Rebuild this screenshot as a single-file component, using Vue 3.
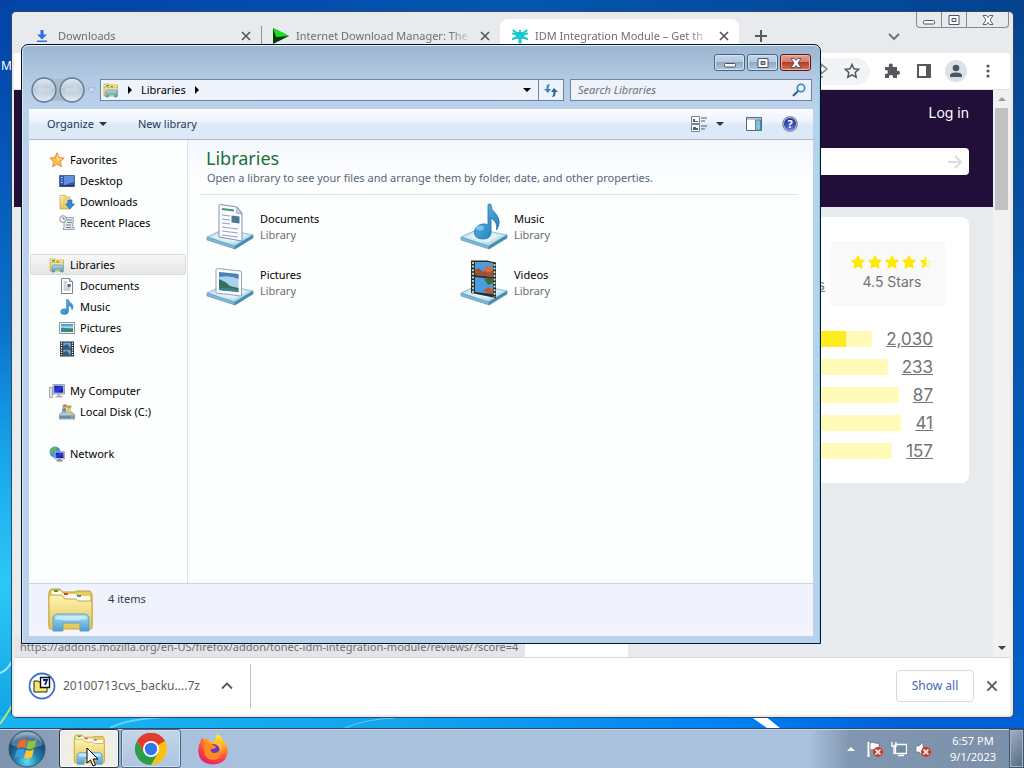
<template>
  <svg class="sprite" aria-hidden="true">
    <defs>
      <linearGradient id="gFolder" x1="0" y1="0" x2="0" y2="1">
        <stop offset="0" stop-color="#fdf3b0" />
        <stop offset="1" stop-color="#e5c556" />
      </linearGradient>
      <linearGradient id="gBlue" x1="0" y1="0" x2="0" y2="1">
        <stop offset="0" stop-color="#a9dcf5" />
        <stop offset="1" stop-color="#4d9fce" />
      </linearGradient>
      <linearGradient id="gNote" x1="0" y1="0" x2="1" y2="1">
        <stop offset="0" stop-color="#6fc3ee" />
        <stop offset="1" stop-color="#1577ba" />
      </linearGradient>
      <linearGradient id="gTray" x1="0" y1="0" x2="1" y2="1">
        <stop offset="0" stop-color="#b4d9ea" />
        <stop offset="0.5" stop-color="#dceff7" />
        <stop offset="1" stop-color="#8bc0dc" />
      </linearGradient>
      <linearGradient id="gScreen" x1="0" y1="0" x2="1" y2="1">
        <stop offset="0" stop-color="#1212a8" />
        <stop offset="0.5" stop-color="#2a3fe0" />
        <stop offset="1" stop-color="#0a0a80" />
      </linearGradient>
      <linearGradient id="gSky" x1="0" y1="0" x2="0" y2="1">
        <stop offset="0" stop-color="#3c86c8" />
        <stop offset="0.5" stop-color="#c3e2ee" />
        <stop offset="0.6" stop-color="#3c7a5c" />
        <stop offset="1" stop-color="#2a5e86" />
      </linearGradient>
      <radialGradient id="gOrb" cx="0.5" cy="0.85" r="0.8">
        <stop offset="0" stop-color="#5fe0f5" />
        <stop offset="0.4" stop-color="#1f7fae" />
        <stop offset="0.8" stop-color="#1a4470" />
        <stop offset="1" stop-color="#7ea2c0" />
      </radialGradient>
      <radialGradient id="gFox" cx="0.7" cy="0.1" r="1">
        <stop offset="0" stop-color="#ffe83a" />
        <stop offset="0.45" stop-color="#ff9a1f" />
        <stop offset="0.75" stop-color="#ff3a4a" />
        <stop offset="1" stop-color="#d81b7a" />
      </radialGradient>
      <linearGradient id="gCircle" x1="0" y1="0" x2="0" y2="1">
        <stop offset="0" stop-color="#dfe8f1" />
        <stop offset="0.5" stop-color="#b9c8d6" />
        <stop offset="1" stop-color="#e2edf7" />
      </linearGradient>
    </defs>

    <symbol id="libraries" viewBox="0 0 16 16">
      <path d="M1 3.500V2h5l1 1h7.500v11H1z" fill="url(#gFolder)" stroke="#c3a148" stroke-width=".7" />
      <path d="M3 3h3v1.500H3z" fill="#4aa34a" />
      <path d="M7.500 4H10v1.200H7.500z" fill="#d9663a" />
      <path d="M1 5.500h13.500" stroke="#c9a84c" stroke-width=".6" />
      <path d="M3 15V9.500q0-1.500 1.500-1.500h8q1.500 0 1.500 1.500V15h-2.500v-3h-6v3z" fill="url(#gBlue)" stroke="#4089b5" stroke-width=".6" />
    </symbol>

    <symbol id="bigfolder" viewBox="0 0 46 46">
      <path d="M2 40V6l2-3h9l2 3h13l2-1h13l2 3v32z" fill="#eacb62" stroke="#bd9a3b" />
      <path d="M5 5h9l2 3h12l2 2h13v5H4z" fill="#fffdf0" />
      <path d="M7 4h4v2H7z" fill="#3ba04a" />
      <path d="M17 7h4v2h-4z" fill="#d5482c" />
      <path d="M30 9h4v2h-4z" fill="#4385d4" />
      <path d="M2 9h13l3 4h11l2 2h14v27q0 1-1 1H3q-1 0-1-1z" fill="url(#gFolder)" stroke="#c6a547" />
      <path d="M6 45V33q0-5 5-5h26q5 0 5 5v12h-9v-7q0-1-1-1H17q-1 0-1 1v7z" fill="url(#gBlue)" stroke="#5aa3cc" />
      <path d="M8 33q0-3 4-3h24q4 0 4 3-16 3-32 0z" fill="#d3effb" opacity=".8" />
    </symbol>

    <symbol id="star" viewBox="0 0 16 16">
      <path d="M8 .8l2.200 4.700 5 .6-3.700 3.500 1 5.200L8 12.200l-4.500 2.600 1-5.200L.8 6.100l5-.6z" fill="#fdb94a" stroke="#d9822b" stroke-width=".8" />
      <path d="M8 2.500l1.500 3.700 3.500.5L8 9z" fill="#ffe59a" />
    </symbol>

    <symbol id="desktop" viewBox="0 0 16 16">
      <path d="M.5 2.500h15v11H.5z" fill="#2a56b8" stroke="#56688a" />
      <path d="M5 3h10v6q-6 1-10 4z" fill="#5f8ee2" />
      <path d="M2 4h1.500v1H2zM2 6.500h1.500v1H2zM2 9h1.500v1H2z" fill="#d7e6ff" />
      <path d="M1 12h14v1.500H1z" fill="#283a5c" />
    </symbol>

    <symbol id="downloads" viewBox="0 0 16 16">
      <path d="M1 1.500h5l1 1.500h4v12H1z" fill="url(#gFolder)" stroke="#c3a148" stroke-width=".7" />
      <path d="M5 1l3 1.500V15L5 13z" fill="#f2dd84" stroke="#c3a148" stroke-width=".5" />
      <path d="M9 6h4v4h2.500L11 15 6.500 10H9z" fill="#2f8be0" stroke="#195a9f" stroke-width=".6" />
    </symbol>

    <symbol id="recent" viewBox="0 0 16 16">
      <path d="M5 2.500h9.500l-1 10h1.500v2H4l1-2z" fill="#e5e9ed" stroke="#858e98" stroke-width=".8" />
      <path d="M8 5h5M8 7.500h5M7 10h5M7 12.500h5" stroke="#768290" />
      <circle cx="4" cy="4" r="3.300" fill="#f5f7f9" stroke="#8b939c" />
      <path d="M4 2v2h2" stroke="#555" fill="none" stroke-width=".8" />
    </symbol>

    <symbol id="document" viewBox="0 0 16 16">
      <path d="M2.500.5h8l3 3v12h-11z" fill="#fff" stroke="#7b8288" />
      <path d="M10.500.5v3h3" fill="#dfe4e8" stroke="#7b8288" />
      <path d="M4.500 4h4M4.500 6h3M4.500 8h3M4.500 10h7M4.500 12h7" stroke="#8a9299" stroke-width=".8" />
      <path d="M8.500 6h3v3h-3z" fill="#45607c" />
    </symbol>

    <symbol id="music" viewBox="0 0 16 16">
      <path d="M7.500.5h2q.5 3 3.500 4.500 2 2 0 6 0-3.500-3.500-4.500v5.500q0 3.500-4 3.500-4 0-4-2.700 0-3 4-3 1 0 2 .3z" fill="url(#gNote)" stroke="#2a82bb" stroke-width=".5" />
    </symbol>

    <symbol id="picture" viewBox="0 0 16 16">
      <path d="M.5 2.500h15v11H.5z" fill="#f5f8fa" stroke="#8695a2" />
      <path d="M2 4h12v8H2z" fill="url(#gSky)" />
      <path d="M2 8q5-1 12 2v2H2z" fill="#2f8d83" />
    </symbol>

    <symbol id="video" viewBox="0 0 16 16">
      <path d="M1 .5h14v15H1z" fill="#202830" />
      <path d="M4.200 1.500h7.600v6H4.200zM4.200 8.500h7.600v6H4.200z" fill="#6fa6cf" />
      <path d="M4.200 5l4-2 3.600 4.500H4.200zM4.200 12l3-2.500 4.600 5H4.200z" fill="#33597e" />
      <path d="M2.500 1.500v13M13.500 1.500v13" stroke="#fff" stroke-width="1.400" stroke-dasharray="1.300 1" />
    </symbol>

    <symbol id="computer" viewBox="0 0 16 16">
      <path d="M.5 4.500h3v10h-3z" fill="#dfe2e6" stroke="#8d949c" stroke-width=".8" />
      <path d="M4 1.500h11.500v9.500H4z" fill="#cfd6dd" stroke="#8b949e" stroke-width=".8" />
      <path d="M5.200 2.700h9v7h-9z" fill="url(#gScreen)" />
      <path d="M8.500 11h3v2h2v1.500h-7V13h2z" fill="#a8b1ba" />
    </symbol>

    <symbol id="disk" viewBox="0 0 16 16">
      <path d="M3 8h10l3 3v4H0v-4z" fill="#bcc6cf" stroke="#6d7984" stroke-width=".6" />
      <path d="M.5 11.500h15v3H.5z" fill="#6c8aa6" />
      <path d="M12 13h2" stroke="#6dfc68" />
      <path d="M4 .8q2-1 4 0L7.500 4q-2-1-4 0z" fill="#e8733a" />
      <path d="M8.500 1q2 1 4 0L12 4.200q-2 1-4 0z" fill="#8cbc3a" />
      <path d="M3.400 4.600q2-1 4 0L7 8q-2-1-4 0z" fill="#4b92d8" />
      <path d="M8 4.800q2 1 4 0L11.500 8.200q-2 1-4 0z" fill="#f3c53c" />
    </symbol>

    <symbol id="network" viewBox="0 0 16 16">
      <circle cx="6" cy="6" r="5.500" fill="#3d9bcb" />
      <path d="M2 3q3-3 6-2L7 4 4 5 3 8 1 6zM6 7l4-2v5l-3 1z" fill="#63b957" />
      <path d="M5.500 5.500h10v7.500h-10z" fill="#d3dbe3" stroke="#8590a0" stroke-width=".6" />
      <path d="M6.500 6.500h8v5.500h-8z" fill="url(#gScreen)" />
      <path d="M9 13h3v1h1.500v1.500h-6V14H9z" fill="#7f8fa0" />
    </symbol>

    <symbol id="tray" viewBox="0 0 48 48">
      <path d="M1 34l17-8 29 6-18 12z" fill="url(#gTray)" stroke="#6fa9c8" stroke-width=".7" />
      <path d="M1 34l28 9v3L1 37z" fill="#7db7d4" stroke="#5795b5" stroke-width=".6" />
      <path d="M29 43l18-11v3L29 46z" fill="#458fb2" stroke="#4685a5" stroke-width=".6" />
      <path d="M7 34l12-5.500 21 4-12 7z" fill="#eaf6fa" opacity=".75" />
    </symbol>

    <symbol id="bigdocument" viewBox="0 0 48 48">
      <use href="#tray" />
      <path d="M13 34V3q0-1.500 1.500-1.500L31 4l5 6v28z" fill="#fafcff" stroke="#8190b2" />
      <path d="M31 4l-.5 6 5.500 1z" fill="#c8d6e6" stroke="#8190b2" stroke-width=".7" />
      <path d="M16 6l12 1.500" stroke="#4f8f77" stroke-width="2" />
      <path d="M16 12l8 1M16 16l8 1M16 20l8 1M16 24l16 2M16 28l16 2M16 32l16 2" stroke="#97a1c0" stroke-width="1.200" />
      <path d="M25.500 12.500l8 1v7l-8-1z" fill="#4d7795" />
    </symbol>

    <symbol id="bigpicture" viewBox="0 0 48 48">
      <use href="#tray" />
      <path d="M10 34V11q0-1.500 1.500-1.500L34 12q1.500 0 1.500 1.500V37z" fill="#fdfeff" stroke="#93a3b3" />
      <path d="M13 13l19.500 2v18L13 31z" fill="#a9d3e8" />
      <path d="M13 13l19.500 2v5q-8-4-19.500-2z" fill="#4a80c0" />
      <path d="M13 20q6 2 11 7l8.500 2v4L13 31z" fill="#35705c" />
      <path d="M13 29l14 .5 5.500 2V33L13 31z" fill="#3f8598" />
    </symbol>

    <symbol id="bigmusic" viewBox="0 0 48 48">
      <use href="#tray" />
      <path d="M28 2q0-1 1.500-1t1.500 1q0 5 5 9 6 8 .5 16 1.500-8-5.500-12v14q0 7-8 7-8.500 0-8.500-6.500T22 21q4-.5 6 1z" fill="url(#gNote)" stroke="#236fa5" stroke-width=".8" />
      <ellipse cx="20" cy="25" rx="4" ry="2.500" fill="#8ed4f5" opacity=".7" />
    </symbol>

    <symbol id="bigvideo" viewBox="0 0 48 48">
      <use href="#tray" />
      <path d="M11 34V1.500h16l9 2V39z" fill="#2b2c2c" />
      <path d="M15 3h13l5 1v14L15 16zM15 18l18 2v15l-18-2z" fill="#4d9cdd" />
      <path d="M15 11l4-2 4 4 4-4 6 3v6L15 16z" fill="#a24f35" />
      <circle cx="28.500" cy="10" r="3.500" fill="#d96a3a" />
      <path d="M24 20l9-1v5l-5 2z" fill="#3d6b33" />
      <path d="M23 32l5-4 5 3v4z" fill="#c2572e" />
      <path d="M13 3v31M34.500 5v33" stroke="#cdeccb" stroke-width="1.800" stroke-dasharray="2 1.600" />
    </symbol>

    <symbol id="close" viewBox="0 0 12 12">
      <path d="M2 2l8 8M10 2l-8 8" stroke="currentColor" stroke-width="1.700" />
    </symbol>

    <symbol id="down" viewBox="0 0 8 8">
      <path d="M0 2h8L4 6z" fill="currentColor" />
    </symbol>

    <symbol id="right" viewBox="0 0 8 8">
      <path d="M2 0v8l4-4z" fill="currentColor" />
    </symbol>

    <symbol id="cap-min" viewBox="0 0 14 12">
      <rect x="1.500" y="6.500" width="11" height="3.500" rx="1" fill="#fff" stroke="#4a5568" />
    </symbol>
    <symbol id="cap-max" viewBox="0 0 14 12">
      <path d="M2 1.500h10v9H2zM5 4.500v3h4v-3z" fill="#fff" fill-rule="evenodd" stroke="#4a5568" />
    </symbol>
    <symbol id="cap-close" viewBox="0 0 14 12">
      <path d="M2 1.500h3.500L7 3.500l1.500-2H12L9 6l3 4.500H8.500L7 8.500l-1.500 2H2L5 6z" fill="#fff" stroke="#4a5060" stroke-width=".9" />
    </symbol>

    <symbol id="rate" viewBox="0 0 14 14">
      <path d="M7 .8l2 4 4.500.6-3.300 3.200.9 4.600L7 11l-4.100 2.200.9-4.600L.5 5.400 5 4.800z" fill="#ffe900" stroke="#ffe900" stroke-linejoin="round" />
    </symbol>
    <symbol id="halfrate" viewBox="0 0 14 14">
      <path d="M7 .8V11l-4.100 2.200.9-4.600L.5 5.400 5 4.800z" fill="#ffe900" />
      <path d="M7 .8l2 4 4.500.6-3.300 3.200.9 4.600L7 11z" fill="#fdf6b0" />
    </symbol>
  </svg>

  <div class="screen">
    <div class="desktop">
      <svg class="wallpaper" viewBox="0 0 1024 728" preserveAspectRatio="none" aria-hidden="true">
        <path d="M0 673q7-2 12-12" stroke="#9fe6fb" stroke-width="2" fill="none" />
        <path d="M0 724q6-8 14-22" stroke="#b3e57c" stroke-width="2" fill="none" />
        <path d="M110 728q20-10 60-11" stroke="#62d3f5" stroke-width="2" fill="none" />
        <path d="M345 728q20-9 50-10" stroke="#6cc7ee" fill="none" />
        <path d="M750 716h15l15 12h-13z" fill="#fff" />
      </svg>
      <span class="desktop-label">M</span>

      <section class="browser">
        <div class="tabstrip">
          <div class="tab">
            <svg class="ic12"><path d="M4.500 0h3v4.500H11L6 9.500 1 4.500h3.500zM1 10.500h10v1.500H1z" fill="#2f6fe0" /></svg>
            <span class="tab-title">Downloads</span>
            <button class="plain" aria-label="Close tab"><svg class="ic12"><use href="#close" /></svg></button>
          </div>
          <div class="tab divided">
            <svg class="ic16"><path d="M0 0l16 8L0 16z" fill="#0b3d0b" /><path d="M0 0l16 8-13 1z" fill="#1fe01f" /></svg>
            <span class="tab-title">Internet Download Manager: The</span>
            <button class="plain" aria-label="Close tab"><svg class="ic12"><use href="#close" /></svg></button>
          </div>
          <div class="tab active">
            <svg class="ic16">
              <path d="M4.500 4H7V2h2v2h2.500L13 5.500 12 8l1 1.500L11 11H9.500v2l-1.500 2-1.500-2v-2H5L3 9.500 4 8 3 5.500z" fill="#17c9cf" />
              <path d="M1.500 2.500L5 5M14.500 2.500L11 5M1 11l4-2M15 11l-4-2M1 5.500l4 1M15 5.500l-4 1" stroke="#17c9cf" stroke-width="2" stroke-linecap="round" />
              <path d="M5.500 13.500h5L8 16z" fill="#17c9cf" />
            </svg>
            <span class="tab-title">IDM Integration Module – Get th</span>
            <button class="plain" aria-label="Close tab"><svg class="ic12"><use href="#close" /></svg></button>
          </div>
          <button class="plain new-tab" aria-label="New tab">
            <svg class="ic12"><path d="M6 0v12M0 6h12" stroke="#555a60" stroke-width="2" /></svg>
          </button>
          <button class="plain tab-search" aria-label="Search tabs">
            <svg class="ic12"><path d="M1 4l5 5 5-5" stroke="#6a6e73" stroke-width="1.800" fill="none" /></svg>
          </button>
          <div class="glass-buttons">
            <button aria-label="Minimize"><svg class="cap"><use href="#cap-min" /></svg></button>
            <button aria-label="Maximize"><svg class="cap"><use href="#cap-max" /></svg></button>
            <button class="wide" aria-label="Close"><svg class="cap"><use href="#cap-close" /></svg></button>
          </div>
        </div>

        <div class="toolbar">
          <div class="omnibox">
            <svg class="ic16"><path d="M1 13V7q0-3 4-3h4V1l6 5-6 5V8H5" stroke="#777b80" stroke-width="1.400" fill="none" /><path d="M1 9v5h10" stroke="#777b80" stroke-width="1.400" fill="none" /></svg>
            <svg class="ic16"><path d="M8 1.500l2 4.300 4.700.5-3.500 3.200 1 4.700L8 11.800l-4.200 2.400 1-4.700L1.300 6.300 6 5.800z" stroke="#55595e" stroke-width="1.500" fill="none" /></svg>
          </div>
          <svg class="ic16"><path d="M1 4h4q-1-3.500 1.800-3.500T8.600 4H13v4q3-.8 3 1.800T13 11.600V15H9q.6-3-2-3t-2 3H1v-4q3 .3 3-2T1 7z" fill="#55595e" /></svg>
          <svg class="ic16"><path d="M1 1h14v14H1zM3 3v10h7V3z" fill="#55595e" fill-rule="evenodd" /></svg>
          <span class="avatar">
            <svg class="ic16"><circle cx="8" cy="5" r="3.300" fill="#4c5661" /><path d="M2 14v-1.500Q2 9.500 8 9.500t6 3V14z" fill="#4c5661" /></svg>
          </span>
          <svg class="ic16"><circle cx="8" cy="3" r="1.600" fill="#55595e" /><circle cx="8" cy="8" r="1.600" fill="#55595e" /><circle cx="8" cy="13" r="1.600" fill="#55595e" /></svg>
        </div>

        <div class="viewport">
          <div class="page">
            <header class="page-header">
              <a href="#" class="login">Log in</a>
              <div class="page-search">
                <input type="text" aria-label="Search add-ons" />
                <svg class="ic16"><path d="M1 8h13M8 2l6 6-6 6" stroke="#dcdce2" stroke-width="2" fill="none" /></svg>
              </div>
            </header>
            <div class="page-body">
              <div class="card"></div>
              <div class="card ratings">
                <div class="summary">
                  <a href="#" class="reviews">s</a>
                  <div class="score">
                    <div class="stars">
                      <svg v-for="n in 4" :key="n" class="ic14"><use href="#rate" /></svg>
                      <svg class="ic14"><use href="#halfrate" /></svg>
                    </div>
                    <span>4.5 Stars</span>
                  </div>
                </div>
                <div v-for="row in ratings" :key="row.count" class="rating-row">
                  <div class="bar"><div class="fill" :style="{ width: row.percent + '%' }"></div></div>
                  <a href="#">{{ row.count }}</a>
                </div>
              </div>
            </div>
            <div class="status-bubble">https://addons.mozilla.org/en-US/firefox/addon/tonec-idm-integration-module/reviews/?score=4</div>
          </div>
          <div class="scrollbar">
            <svg class="ic8"><path d="M0 6l4-4 4 4z" fill="#9b9b9b" /></svg>
            <div class="thumb"></div>
            <svg class="ic8 dark"><use href="#down" /></svg>
          </div>
        </div>

        <footer class="shelf">
          <div class="download">
            <svg class="ic28">
              <circle cx="14" cy="14" r="12.500" fill="#fff" stroke="#3a70d0" stroke-width="1.800" />
              <path d="M6 9h4l1 1h8v10H6z" fill="#f5e96b" stroke="#222" />
              <path d="M12.500 5.500h9v10h-9z" fill="#fff" stroke="#111" stroke-width="1.400" />
              <path d="M15 8h4l-2 5" stroke="#111c78" stroke-width="1.800" fill="none" />
            </svg>
            <span>20100713cvs_backu....7z</span>
            <button class="plain" aria-label="Download options">
              <svg class="ic12"><path d="M1 8.500l5-5 5 5" stroke="#55595e" stroke-width="1.800" fill="none" /></svg>
            </button>
          </div>
          <button class="show-all">Show all</button>
          <button class="plain shelf-close" aria-label="Close downloads bar"><svg class="ic14"><use href="#close" /></svg></button>
        </footer>
      </section>

      <section class="explorer">
        <div class="titlebar">
          <button aria-label="Minimize"><svg class="cap"><use href="#cap-min" /></svg></button>
          <button aria-label="Maximize"><svg class="cap"><use href="#cap-max" /></svg></button>
          <button class="red" aria-label="Close"><svg class="cap"><use href="#cap-close" /></svg></button>
        </div>

        <div class="navbar">
          <svg class="travel">
            <path d="M14 2h29v22H14z" fill="#a9bbcd" />
            <circle cx="14" cy="13" r="12" fill="url(#gCircle)" stroke="#64788e" stroke-width="1.400" />
            <circle cx="42" cy="13" r="12" fill="url(#gCircle)" stroke="#64788e" stroke-width="1.400" />
            <path d="M6 13l7-6v4h8v4h-8v4z" fill="#cbd8e4" />
            <path d="M50 13l-7-6v4h-8v4h8v4z" fill="#cbd8e4" />
            <path d="M58 11h7l-3.500 5z" fill="#d8e6f3" stroke="#8da4bb" stroke-width=".7" />
          </svg>
          <div class="address">
            <svg class="ic16"><use href="#libraries" /></svg>
            <svg class="ic8"><use href="#right" /></svg>
            <button class="plain">Libraries</button>
            <svg class="ic8"><use href="#right" /></svg>
            <button class="plain history" aria-label="Previous locations"><svg class="ic8"><use href="#down" /></svg></button>
            <button class="plain refresh" aria-label="Refresh">
              <svg class="ic16"><path d="M7 2q-4 0-3.500 5H1l4 4 3-4H5.500Q5.500 4 7 2z" fill="#3a85bd" /><path d="M9 15q4 0 3.500-5H15l-4-4-3 4h2.500q0 3-1.500 5z" fill="#2a6798" /></svg>
            </button>
          </div>
          <div class="search">
            <input type="search" placeholder="Search Libraries" aria-label="Search Libraries" />
            <svg class="ic14"><circle cx="9" cy="5" r="3.700" fill="#e8f4fc" stroke="#3c7fb5" stroke-width="1.600" /><path d="M6 8l-5 5" stroke="#33648f" stroke-width="2.200" /></svg>
          </div>
        </div>

        <div class="commands">
          <button class="plain organize">Organize <svg class="ic8"><use href="#down" /></svg></button>
          <button class="plain">New library</button>
          <button class="plain views" aria-label="Change your view">
            <svg class="ic16">
              <path d="M.5.500h8v7h-8zM.5 8.500h8v7h-8z" fill="#fff" stroke="#77838f" />
              <path d="M2 3h2v2h3v1H2zM2 11h3v1h2v2H2z" fill="#4d6270" />
              <path d="M10 2h6M10 5h4M10 10h6M10 13h4" stroke="#4d5f72" />
            </svg>
            <svg class="ic8"><use href="#down" /></svg>
          </button>
          <button class="plain preview" aria-label="Show the preview pane">
            <svg class="ic16"><path d="M.5 1.500h15v13H.5z" fill="#fff" stroke="#4d6c88" /><path d="M1 2h14v2H1z" fill="#b9c9d6" /><path d="M9.500 4h5v10h-5z" fill="#7fc3dc" stroke="#4f88a5" /></svg>
          </button>
          <button class="plain help" aria-label="Get help">?</button>
        </div>

        <div class="panes">
          <nav class="tree">
            <ul v-for="group in tree" :key="group.label">
              <li>
                <a href="#" :class="{ selected: group.selected }">
                  <svg class="ic16"><use :href="'#' + group.icon" /></svg>{{ group.label }}
                </a>
              </li>
              <li v-for="item in group.items" :key="item.label">
                <a href="#" class="child">
                  <svg class="ic16"><use :href="'#' + item.icon" /></svg>{{ item.label }}
                </a>
              </li>
            </ul>
          </nav>

          <main class="content">
            <div class="heading">
              <h1>Libraries</h1>
              <p>Open a library to see your files and arrange them by folder, date, and other properties.</p>
            </div>
            <div class="tiles">
              <a v-for="lib in libraries" :key="lib.label" href="#" class="tile">
                <svg class="ic48"><use :href="'#' + lib.icon" /></svg>
                <span>{{ lib.label }}<small>Library</small></span>
              </a>
            </div>
          </main>
        </div>

        <div class="details">
          <svg class="ic46"><use href="#bigfolder" /></svg>
          <span>4 items</span>
        </div>
      </section>
    </div>

    <footer class="taskbar">
      <button class="plain start" aria-label="Start">
        <svg viewBox="0 0 38 38">
          <circle cx="19" cy="19" r="18" fill="url(#gOrb)" stroke="#34526e" />
          <path d="M3 15a16.500 16.500 0 0 1 32 0q-16 6-32 0z" fill="#fff" opacity=".25" />
          <path d="M11 11q4-3 8-1l-2 8q-4-2-8 1z" fill="#ee6a2c" />
          <path d="M20.500 10.500q4 2 8-1l-2 8q-4 3-8 1z" fill="#8cc63c" />
          <path d="M8.500 20.500q4-3 8-1l-2 8q-4-2-8 1z" fill="#3d9ae0" />
          <path d="M18 20q4 2 8-1l-2 8q-4 3-8 1z" fill="#fbc52c" />
        </svg>
      </button>
      <button class="task current" aria-label="Libraries"><svg class="ic32"><use href="#bigfolder" /></svg></button>
      <button class="task open" aria-label="Google Chrome">
        <svg class="ic32" viewBox="0 0 32 32">
          <circle cx="16" cy="16" r="16" fill="#fbc116" />
          <path d="M16 16L2.140 8A16 16 0 0 1 29.860 8z" fill="#e33b2e" />
          <path d="M16 8h13.860A16 16 0 0 0 2.140 8L9.070 20z" fill="#e33b2e" />
          <path d="M9.070 20L2.140 8A16 16 0 0 0 16 32l6.930-12z" fill="#2a9d4c" />
          <circle cx="16" cy="16" r="8" fill="#fff" />
          <circle cx="16" cy="16" r="6.200" fill="#2f74e8" />
        </svg>
      </button>
      <button class="task" aria-label="Firefox">
        <svg class="ic32" viewBox="0 0 32 32">
          <path d="M20 0q6 5 7 9 4 4 3.500 10-1 12-14.500 12.500Q2 31 1.200 18 1 12 4 7.500l1-3 2.500 2.500Q10 5 12 5q-1 2 0 3l5 1q2-5 3-9z" fill="url(#gFox)" />
          <circle cx="16" cy="18" r="7" fill="#6a35c9" />
          <path d="M7 12q5-4 9 0 3 1 3 2-1 2-5 2-1 3 3 4 4 0 6-4 3 9-6 11-9 0-10-9z" fill="#ff8a1f" />
          <path d="M14 10q9-1 9 8 4-7-2-12-1 3-7 4z" fill="#ffc42c" />
        </svg>
      </button>

      <div class="tray">
        <svg class="ic8 up"><use href="#down" /></svg>
        <svg class="ic16">
          <path d="M1.500 1v15" stroke="#fff" stroke-width="2" /><path d="M3 2q3-1 5 0t4 0v7q-2 1-4 0T3 9z" fill="#fff" stroke="#56687c" stroke-width=".6" />
          <circle cx="11" cy="11" r="5" fill="#cf3a2c" /><path d="M8.500 8.500l5 5M13.500 8.500l-5 5" stroke="#fff" stroke-width="1.600" />
        </svg>
        <svg class="ic16">
          <path d="M4.500 3.500h11v9h-11z" fill="#7488a0" stroke="#fff" stroke-width="1.300" /><path d="M7 14.500h6M1 1v4h4V1M3 5v7h2" stroke="#fff" stroke-width="1.400" fill="none" />
        </svg>
        <svg class="ic16">
          <path d="M1 5h3l4-4v14l-4-4H1z" fill="#fff" stroke="#56687c" stroke-width=".6" />
          <circle cx="11" cy="11" r="5" fill="#cf3a2c" /><path d="M8.500 8.500l5 5M13.500 8.500l-5 5" stroke="#fff" stroke-width="1.600" />
        </svg>
      </div>
      <div class="clock"><span>6:57 PM</span><span>9/1/2023</span></div>
      <button class="show-desktop" aria-label="Show desktop"></button>
    </footer>

    <svg class="cursor" viewBox="0 0 13 20" aria-hidden="true">
      <path d="M1 1v15l3.500-3 2.500 6 2.500-1L7 12h5z" fill="#fff" stroke="#000" />
    </svg>
  </div>
</template>

<script setup>
import { ref } from 'vue'

const ratings = ref([
  { count: '2,030', percent: 80 },
  { count: '233', percent: 9 },
  { count: '87', percent: 3 },
  { count: '41', percent: 2 },
  { count: '157', percent: 6 }
])

const tree = ref([
  {
    label: 'Favorites',
    icon: 'star',
    items: [
      { label: 'Desktop', icon: 'desktop' },
      { label: 'Downloads', icon: 'downloads' },
      { label: 'Recent Places', icon: 'recent' }
    ]
  },
  {
    label: 'Libraries',
    icon: 'libraries',
    selected: true,
    items: [
      { label: 'Documents', icon: 'document' },
      { label: 'Music', icon: 'music' },
      { label: 'Pictures', icon: 'picture' },
      { label: 'Videos', icon: 'video' }
    ]
  },
  {
    label: 'My Computer',
    icon: 'computer',
    items: [{ label: 'Local Disk (C:)', icon: 'disk' }]
  },
  { label: 'Network', icon: 'network', items: [] }
])

const libraries = ref([
  { label: 'Documents', icon: 'bigdocument' },
  { label: 'Music', icon: 'bigmusic' },
  { label: 'Pictures', icon: 'bigpicture' },
  { label: 'Videos', icon: 'bigvideo' }
])
</script>

<style>
body {
  margin: 0;
}
</style>

<style scoped>
* {
  box-sizing: border-box;
}

.sprite {
  position: absolute;
  width: 0;
  height: 0;
}

.screen {
  position: relative;
  display: flex;
  flex-direction: column;
  height: 100vh;
  overflow: hidden;
  font-family: 'Noto Sans', 'Open Sans', sans-serif;
  font-size: 11px;
  line-height: 16px;
  color: #000;
}

svg {
  flex: none;
  display: block;
}

a {
  color: inherit;
  text-decoration: none;
}

button,
input {
  font: inherit;
  color: inherit;
}

.plain {
  display: flex;
  align-items: center;
  padding: 0;
  border: none;
  background: none;
}

.ic8 { width: 8px; height: 8px; }
.ic12 { width: 12px; height: 12px; }
.ic14 { width: 14px; height: 14px; }
.ic16 { width: 16px; height: 16px; }
.ic28 { width: 28px; height: 28px; }
.ic32 { width: 32px; height: 32px; }
.ic46 { width: 46px; height: 46px; }
.ic48 { width: 48px; height: 48px; }
.cap { width: 14px; height: 12px; }

/* desktop */
.desktop {
  position: relative;
  flex: 1;
  background:
    linear-gradient(90deg, #18b4f2, #12a4ee 40%, #0080f4 72%, #0060d8 88%) bottom / 100% 12px no-repeat,
    linear-gradient(#06428c, #0456ae 40%, #0060cc) right / 12px 100% no-repeat,
    linear-gradient(90deg, #0343a8, #0356b0 50%, #034290) top / 100% 12px no-repeat,
    linear-gradient(#0343a4, #0550b4 16%, #0a72cc 45%, #16a4ea 62%, #2cc8f8 80%, #0fa2e4);
}

.wallpaper {
  position: absolute;
  inset: 0;
  width: 100%;
  height: 100%;
}

.desktop-label {
  position: absolute;
  left: 1px;
  top: 58px;
  font-size: 12px;
  color: #fff;
}

/* browser window */
.browser {
  position: absolute;
  inset: 11px 10px 10px 11px;
  display: flex;
  flex-direction: column;
  padding: 0 3px 2px 2px;
  border: 1px solid #2c4a68;
  border-radius: 5px;
  background: #e9eaed;
}

.tabstrip {
  display: flex;
  align-items: flex-end;
  height: 41px;
  padding-left: 8px;
}

.tab {
  display: flex;
  align-items: center;
  gap: 7px;
  width: 239px;
  height: 34px;
  padding: 0 9px 0 12px;
  color: #6c6f73;
}

.tab:first-child {
  gap: 10px;
  padding-left: 14px;
}

.tab.divided {
  background: linear-gradient(#8d9094, #8d9094) left / 1px 20px no-repeat;
}

.tab.active {
  border-radius: 8px 8px 0 0;
  background: #fff;
}

.tab-title {
  flex: 1;
  overflow: hidden;
  white-space: nowrap;
  mask-image: linear-gradient(90deg, #000 88%, transparent);
}

.tab .plain {
  color: #55595e;
}

.new-tab,
.tab-search {
  height: 34px;
  padding: 0 16px;
}

.tab-search {
  margin-left: auto;
}

.glass-buttons {
  display: flex;
  align-self: flex-start;
  margin-right: 1px;
  border: 1px solid #85898f;
  border-top: none;
  border-radius: 0 0 4px 4px;
}

.glass-buttons button {
  display: flex;
  align-items: center;
  justify-content: center;
  width: 25px;
  height: 15px;
  padding: 0;
  border: none;
  border-right: 1px solid #85898f;
  background: none;
}

.glass-buttons .wide {
  width: 41px;
  border-right: none;
}

.toolbar {
  display: flex;
  align-items: center;
  gap: 16px;
  height: 37px;
  padding-right: 14px;
  border-bottom: 1px solid #dfe1e5;
  border-radius: 0 4px 0 0;
  background: #fff;
}

.omnibox {
  display: flex;
  flex: 1;
  align-items: center;
  justify-content: flex-end;
  gap: 16px;
  height: 27px;
  margin-left: 90px;
  padding-right: 10px;
  border-radius: 14px;
  background: #f1f3f4;
}

.toolbar > .ic16:first-of-type {
  margin-left: -2px;
}

.avatar {
  display: flex;
  align-items: center;
  justify-content: center;
  width: 22px;
  height: 22px;
  margin: 0 -3px;
  border-radius: 50%;
  background: #dbe1e7;
}

.viewport {
  display: flex;
  flex: 1;
  min-height: 0;
}

.page {
  position: relative;
  display: flex;
  flex: 1;
  flex-direction: column;
  overflow: hidden;
  background: #e9ecef;
  font-family: Inter, 'Liberation Sans', sans-serif;
}

.page-header {
  display: flex;
  flex-direction: column;
  align-items: flex-end;
  gap: 25px;
  height: 117px;
  padding: 13px 24px 0;
  background: #210f3a;
}

.login {
  font-size: 14px;
  line-height: 20px;
  color: #fff;
}

.page-search {
  display: flex;
  align-items: center;
  width: 317px;
  height: 27px;
  padding-right: 6px;
  border-radius: 4px;
  background: #fff;
}

.page-search input {
  flex: 1;
  min-width: 0;
  border: none;
  background: none;
}

.page-body {
  display: grid;
  flex: 1;
  grid-template-columns: 1fr 317px;
  gap: 24px;
  padding: 10px 24px 0;
}

.card {
  border-radius: 8px 8px 0 0;
  background: #fff;
}

.ratings {
  align-self: start;
  padding: 24px 36px 18px 88px;
  border-radius: 8px;
  font-size: 17px;
  color: #737373;
}

.summary {
  display: flex;
  align-items: flex-end;
  gap: 6px;
  margin: 0 -12px 18px 0;
}

.reviews {
  flex: 1;
  padding-bottom: 14px;
  font-size: 14px;
  line-height: 16px;
  text-align: right;
  text-decoration: underline;
}

.score {
  display: flex;
  flex-direction: column;
  align-items: center;
  gap: 4px;
  width: 114px;
  height: 66px;
  padding: 14px 2px 0 10px;
  border-radius: 4px;
  background: #f9f9fa;
  font-size: 14px;
  line-height: 18px;
}

.stars {
  display: flex;
  gap: 3px;
}

.rating-row {
  display: flex;
  align-items: center;
  gap: 14px;
  height: 28px;
}

.rating-row a {
  text-decoration: underline;
}

.bar {
  flex: 1;
  height: 16px;
  background: #fffab8;
}

.fill {
  height: 100%;
  background: #ffec1f;
}

.status-bubble {
  position: absolute;
  left: 0;
  bottom: 0;
  padding: 2px 7px 2px 6px;
  background: #e3e5e8;
  font-family: 'Noto Sans', 'Open Sans', sans-serif;
  color: #6c6f73;
}

.scrollbar {
  display: flex;
  flex-direction: column;
  align-items: center;
  gap: 5px;
  width: 17px;
  padding: 5px 0;
  background: #f1f1f1;
  color: #404040;
}

.thumb {
  width: 13px;
  height: 102px;
  background: #c1c1c1;
}

.dark {
  margin-top: auto;
}

.shelf {
  display: flex;
  align-items: center;
  height: 58px;
  padding: 0 11px 2px 14px;
  border-top: 1px solid #d5d7da;
  background: #fff;
  font-size: 12px;
  color: #5b5e63;
}

.download {
  display: flex;
  align-items: center;
  gap: 7px;
  height: 44px;
  padding-right: 17px;
  border-right: 1px solid #bfc1c4;
}

.download .plain {
  margin-left: 14px;
}

.show-all {
  width: 78px;
  height: 32px;
  margin-left: auto;
  padding: 0;
  border: 1px solid #d9dbdf;
  border-radius: 4px;
  background: #fff;
  color: #4468b4;
}

.shelf-close {
  margin-left: 11px;
}

/* explorer window */
.explorer {
  position: absolute;
  inset: 44px 203px 84px 21px;
  display: flex;
  flex-direction: column;
  padding: 0 7px 7px;
  border: 1px solid #0a1420;
  border-radius: 7px 7px 0 0;
  background: linear-gradient(#9cb5d0, #b2cae3 34px, #b9d1ea 60px, #b9d1ea);
  box-shadow: inset 0 1px #e8f2fb, inset -1px 0 #6fd3ee, inset 1px 0 #d8e8f6;
}

.titlebar {
  display: flex;
  justify-content: flex-end;
  gap: 2px;
  height: 32px;
  padding: 9px 2px 0;
}

.titlebar button {
  display: flex;
  align-items: center;
  justify-content: center;
  width: 31px;
  height: 17px;
  padding: 0;
  border: 1px solid #4c6480;
  border-radius: 3px;
  background: linear-gradient(#c6d8ea, #b3c8dd 48%, #8fa9c4 50%, #b0c9e2);
  box-shadow: inset 0 0 0 1px #d5e4f2;
}

.titlebar .red {
  border-color: #5a1a1a;
  background: linear-gradient(#e5a297, #d47b6c 48%, #b93a25 50%, #d4765c);
  box-shadow: inset 0 0 0 1px #ecb5a8;
}

.navbar {
  display: flex;
  align-items: center;
  height: 32px;
  padding: 0 1px 6px;
}

.travel {
  width: 70px;
  height: 26px;
}

.address,
.search {
  display: flex;
  align-items: center;
  height: 22px;
  border: 1px solid #6e8298;
  background: #eef3fb;
}

.address {
  flex: 1;
  gap: 7px;
  padding-left: 2px;
}

.history {
  margin-left: auto;
}

.refresh {
  align-self: stretch;
  padding: 0 4px;
  border-left: 1px solid #6e8298;
}

.search {
  width: 242px;
  margin-left: 6px;
  padding: 0 5px 0 7px;
}

.search input {
  flex: 1;
  min-width: 0;
  padding: 0;
  border: none;
  background: none;
}

.search input::placeholder {
  font-style: italic;
  color: #6b7078;
}

.commands {
  display: flex;
  align-items: center;
  height: 31px;
  padding: 0 15px 0 18px;
  border-bottom: 1px solid #a9b9cc;
  background: linear-gradient(#fbfdff, #edf4fc 40%, #dde8f6 55%, #dfe9f7);
  color: #1e395b;
}

.organize {
  gap: 5px;
  margin-right: 31px;
}

.views {
  gap: 9px;
  margin-left: auto;
}

.preview {
  margin: 0 20px 0 22px;
}

.help {
  justify-content: center;
  width: 16px;
  height: 16px;
  border: 1px solid #8a93ac;
  border-radius: 50%;
  background: radial-gradient(circle at 50% 80%, #5a7be0, #232f96 70%);
  box-shadow: inset 0 0 0 1px #b8c2dd;
  color: #fff;
  font-weight: 700;
  line-height: 14px;
}

.panes {
  display: flex;
  flex: 1;
  min-height: 0;
  background: #fdfefe;
}

.tree {
  width: 159px;
  padding: 9px 1px 0;
  border-right: 1px solid #dce4ee;
}

.tree ul {
  margin: 0 0 21px;
  padding: 0;
  list-style: none;
}

.tree a {
  display: flex;
  align-items: center;
  gap: 5px;
  height: 21px;
  padding-left: 18px;
  border: 1px solid transparent;
}

.tree .child {
  padding-left: 28px;
}

.tree .selected {
  border-color: #d9d9d9;
  border-radius: 2px;
  background: linear-gradient(#f8f8f8, #e6e6e6);
}

.content {
  flex: 1;
  padding: 0 15px 0 12px;
  background: linear-gradient(#f3f7fd, #fdfefe 40px);
}

.heading {
  height: 55px;
  padding: 6px 6px 0;
  border-bottom: 1px solid #e0e4ea;
}

h1 {
  margin: 0;
  font-size: 18px;
  font-weight: 400;
  line-height: 24px;
  color: #1c6e36;
}

.heading p {
  margin: 0;
  padding-left: 1px;
  color: #5a6573;
}

.tiles {
  display: grid;
  grid-template-columns: repeat(auto-fill, 254px);
  grid-auto-rows: 56px;
  padding: 4px 0 0 6px;
}

.tile {
  display: flex;
  align-items: center;
  gap: 6px;
}

.tile small {
  display: block;
  font-size: inherit;
  color: #6d6d6d;
}

.details {
  display: flex;
  gap: 15px;
  height: 53px;
  padding: 2px 18px 0;
  border-top: 1px solid #cbd5e2;
  background: linear-gradient(#eff3fd, #f0f3fc 70%, #f6f3fb);
  color: #2b3b52;
}

.details span {
  padding-top: 5px;
}

/* taskbar */
.taskbar {
  display: flex;
  align-items: stretch;
  height: 40px;
  border-top: 1px solid #2c4a6c;
  background: linear-gradient(90deg, #7e92ab, #8b9fb8 50px, #a9c1dd 180px, #a9c1dd 79%, #8196b0 83%, #7c90aa);
  box-shadow: inset 0 1px #c9d8e8;
}

.start {
  width: 38px;
  margin: 0 13px 0 8px;
}

.start svg {
  width: 38px;
  height: 38px;
}

.task {
  display: flex;
  align-items: center;
  justify-content: center;
  width: 60px;
  margin-right: 2px;
  padding: 0;
  border: 1px solid transparent;
  border-radius: 3px;
  background: none;
}

.task.current {
  border-color: #26384c;
  background: radial-gradient(circle at 50% 60%, #f7eab8, #f1efe4 60%, #e9eef2);
  box-shadow: inset 0 0 0 1px #fff;
}

.task.open {
  border-color: #4f6780;
  background: linear-gradient(#c3d5ea, #aec5e0);
  box-shadow: inset 0 0 0 1px #d2e1f2;
}

.tray {
  display: flex;
  align-items: center;
  gap: 8px;
  margin: 0 6px 0 auto;
  color: #fff;
}

.up {
  margin-right: 4px;
  transform: rotate(180deg);
}

.clock {
  display: flex;
  flex-direction: column;
  justify-content: center;
  width: 72px;
  text-align: center;
  color: #fff;
}

.show-desktop {
  width: 15px;
  padding: 0;
  border: 1px solid #3f546c;
  background: linear-gradient(135deg, #9fb0c4, #56697f);
  box-shadow: inset 0 0 0 1px #a4b5c8;
}

.cursor {
  position: absolute;
  left: 86px;
  bottom: 1px;
  width: 13px;
  height: 20px;
}
</style>
